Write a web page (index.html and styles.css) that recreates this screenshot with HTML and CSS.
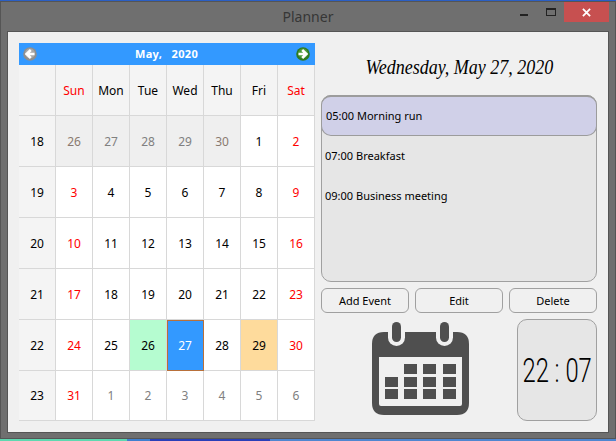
FILE: index.html
```html
<!DOCTYPE html>
<html lang="en">
<head>
<meta charset="utf-8">
<title>Planner</title>
<link rel="stylesheet" href="styles.css">
</head>
<body>
<div class="desktop-top"></div>
<div class="window">
  <header class="titlebar">
    <span class="title">Planner</span>
    <div class="controls">
      <span class="min"></span>
      <span class="max"></span>
      <span class="close">
        <svg width="9" height="9" viewBox="0 0 10 10"><path d="M1 1 9 9M9 1 1 9" stroke="#fff" stroke-width="2"/></svg>
      </span>
    </div>
  </header>
  <main class="client">
    <section class="calendar">
      <div class="cal-nav">
        <svg class="arrow" width="14" height="14" viewBox="0 0 14 14"><circle cx="7" cy="7" r="6.8" fill="#8f8f8f"/><circle cx="7" cy="6.5" r="5" fill="#a8a8a8"/><path d="M11.5 7H4.5M7.8 3 3.6 7 7.8 11" fill="none" stroke="#fff" stroke-width="2.6"/></svg>
        <span class="month">May,&nbsp;&nbsp; 2020</span>
        <svg class="arrow" width="14" height="14" viewBox="0 0 14 14"><circle cx="7" cy="7" r="6.8" fill="#2f7a22"/><circle cx="7" cy="6.5" r="5" fill="#4a9a38"/><path d="M2.5 7h7M6.2 3 10.4 7 6.2 11" fill="none" stroke="#fff" stroke-width="2.6"/></svg>
      </div>
      <div class="cal-grid">
        <div class="hd"></div><div class="hd red">Sun</div><div class="hd">Mon</div><div class="hd">Tue</div><div class="hd">Wed</div><div class="hd">Thu</div><div class="hd">Fri</div><div class="hd red">Sat</div>
        <div class="wk">18</div><div class="d old2">26</div><div class="d old">27</div><div class="d old">28</div><div class="d old">29</div><div class="d old2">30</div><div class="d">1</div><div class="d red">2</div>
        <div class="wk">19</div><div class="d red">3</div><div class="d">4</div><div class="d">5</div><div class="d">6</div><div class="d">7</div><div class="d">8</div><div class="d red">9</div>
        <div class="wk">20</div><div class="d red">10</div><div class="d">11</div><div class="d">12</div><div class="d">13</div><div class="d">14</div><div class="d">15</div><div class="d red">16</div>
        <div class="wk">21</div><div class="d red">17</div><div class="d">18</div><div class="d">19</div><div class="d">20</div><div class="d">21</div><div class="d">22</div><div class="d red">23</div>
        <div class="wk">22</div><div class="d red">24</div><div class="d">25</div><div class="d green">26</div><div class="d selected">27</div><div class="d">28</div><div class="d orange">29</div><div class="d red">30</div>
        <div class="wk">23</div><div class="d red">31</div><div class="d next">1</div><div class="d next">2</div><div class="d next">3</div><div class="d next">4</div><div class="d next">5</div><div class="d next">6</div>
      </div>
    </section>
    <section class="side">
      <h1 class="date"><span class="date-text">Wednesday, May 27, 2020</span></h1>
      <div class="events">
        <div class="event active">05:00 Morning run</div>
        <div class="event">07:00 Breakfast</div>
        <div class="event">09:00 Business meeting</div>
      </div>
      <div class="buttons">
        <button class="btn">Add Event</button>
        <button class="btn">Edit</button>
        <button class="btn">Delete</button>
      </div>
      <div class="bottom">
        <div class="icon-wrap">
          <svg width="97" height="93" viewBox="0 0 97 93">
            <path fill="#4f4f4f" fill-rule="evenodd" d="M12 10H85Q97 10 97 22V81Q97 93 85 93H12Q0 93 0 81V22Q0 10 12 10ZM7 35V82Q7 84 9 84H88Q90 84 90 82V35Z"/>
            <rect x="16" y="-2" width="17" height="26" rx="8.5" fill="#f0f0f0"/>
            <rect x="64" y="-2" width="17" height="26" rx="8.5" fill="#f0f0f0"/>
            <rect x="20" y="0" width="9" height="20" rx="4.5" fill="#4f4f4f"/>
            <rect x="68" y="0" width="9" height="20" rx="4.5" fill="#4f4f4f"/>
            <g fill="#4f4f4f">
              <rect x="32" y="42" width="13" height="10"/><rect x="51" y="42" width="13" height="10"/><rect x="71" y="42" width="13" height="10"/>
              <rect x="13" y="55" width="13" height="10"/><rect x="32" y="55" width="13" height="10"/><rect x="51" y="55" width="13" height="10"/><rect x="71" y="55" width="13" height="10"/>
              <rect x="13" y="67" width="13" height="10"/><rect x="32" y="67" width="13" height="10"/><rect x="51" y="67" width="13" height="10"/><rect x="71" y="67" width="13" height="10"/>
            </g>
          </svg>
        </div>
        <div class="clock"><span class="time">22 : 07</span></div>
      </div>
    </section>
  </main>
</div>
<div class="desktop-bottom"></div>
</body>
</html>
```
FILE: styles.css
```css
* { box-sizing: border-box; }
html, body { margin: 0; padding: 0; }
body {
  width: 616px;
  height: 441px;
  overflow: hidden;
  background: #3f7fd0;
  font-family: "Noto Sans", "Open Sans", sans-serif;
  font-size: 12px;
  color: #000;
}
.desktop-top { height: 1px; background: #2b5fc4; }
.desktop-bottom {
  height: 2px;
  background: linear-gradient(to right, #5fd8b0 0 127px, #3f7fd0 127px 150px, #2a3fb8 150px 270px, #4f86d0 270px);
}
.window {
  height: 438px;
  background: #6f6f6f;
  box-shadow: inset 0 0 0 1px #555;
  display: flex;
  flex-direction: column;
  padding: 0 7px 6px;
}
.titlebar {
  height: 31px;
  flex: none;
  display: flex;
  align-items: center;
  justify-content: center;
  position: relative;
  padding-bottom: 1px;
}
.title { font-size: 14px; color: #363636; }
.controls {
  position: absolute;
  top: 1px;
  right: 0;
  display: flex;
  align-items: flex-start;
}
.min { width: 8px; height: 2px; margin-top: 12px; margin-right: 18px; background: #222; }
.max { width: 10px; height: 8px; margin-top: 6px; margin-right: 8px; border: 1px solid #222; border-top-width: 2px; }
.close {
  width: 45px;
  height: 20px;
  background: #c75050;
  display: flex;
  align-items: center;
  justify-content: center;
}
.client {
  flex: 1;
  background: #f0f0f0;
  border: 1px solid #555;
  border-top-width: 0;
  box-shadow: 0 -1px 0 #555;
  display: flex;
  padding: 11px 11px 11px;
  gap: 6px;
}
.calendar { width: 296px; flex: none; }
.cal-nav {
  height: 22px;
  background: #3399ff;
  display: flex;
  align-items: center;
  justify-content: space-between;
  padding: 0 5px 1px 4px;
  color: #fff;
  font-weight: 700;
  font-size: 11px;
}
.arrow { display: block; }
.month { letter-spacing: 0.3px; }
.cal-grid {
  display: grid;
  grid-template-columns: repeat(8, 37px);
  grid-template-rows: repeat(6, 51px) 50px;
  background: #fff;
  text-align: center;
}
.hd, .wk, .d {
  display: flex;
  align-items: center;
  justify-content: center;
  border-right: 1px solid #d8d8d8;
  border-bottom: 1px solid #d8d8d8;
}
.hd, .wk { background: #f4f4f4; }
.red { color: #f00; }
.old { background: #efefef; color: #808080; }
.old2 { background: #efefef; color: #8a7a70; }
.next { color: #808080; }
.green { background: #b5fcd0; }
.orange { background: #fedb9c; }
.selected { background: #3399ff; color: #fff; outline: 1px solid #b8703a; outline-offset: -1px; }
.side { flex: 1; display: flex; flex-direction: column; }
.date {
  margin: 0;
  height: 52px;
  padding-bottom: 3px;
  display: flex;
  align-items: center;
  justify-content: center;
  font-family: "Liberation Serif", serif;
  font-style: italic;
  font-weight: 400;
  font-size: 20px;
}
.date-text { display: block; white-space: nowrap; transform: scaleX(0.9); }
.events {
  height: 187px;
  background: #e6e6e6;
  border: 1px solid #a0a0a0;
  border-radius: 10px;
  font-size: 11px;
}
.event { height: 40px; display: flex; align-items: center; padding-left: 3px; }
.event.active {
  background: #d0d0e8;
  border: 1px solid #9c9c9c;
  border-top: 2px solid #9c9c9c;
  border-radius: 10px;
  margin: -1px -1px -1px;
  height: 41px;
  padding: 0 0 2px 4px;
}
.buttons { display: flex; gap: 6px; margin-top: 6px; }
.btn {
  flex: 1;
  height: 25px;
  border: 1px solid #a0a0a0;
  border-radius: 6px;
  background: #f0f0f0;
  font: inherit;
  font-size: 11px;
  padding: 0;
  color: #000;
}
.bottom { display: flex; justify-content: space-between; margin-top: 6px; flex: 1; }
.icon-wrap { padding: 3px 0 0 51px; }
.icon-wrap svg { display: block; overflow: visible; }
.clock {
  width: 80px;
  height: 102px;
  background: #e6e6e6;
  border: 1px solid #a0a0a0;
  border-radius: 10px;
  display: flex;
  align-items: center;
  justify-content: center;
  overflow: hidden;
}
.time {
  font-family: "Roboto", sans-serif;
  font-weight: 300;
  font-size: 33px;
  display: block;
  white-space: nowrap;
  transform: scaleX(0.72);
}
```
